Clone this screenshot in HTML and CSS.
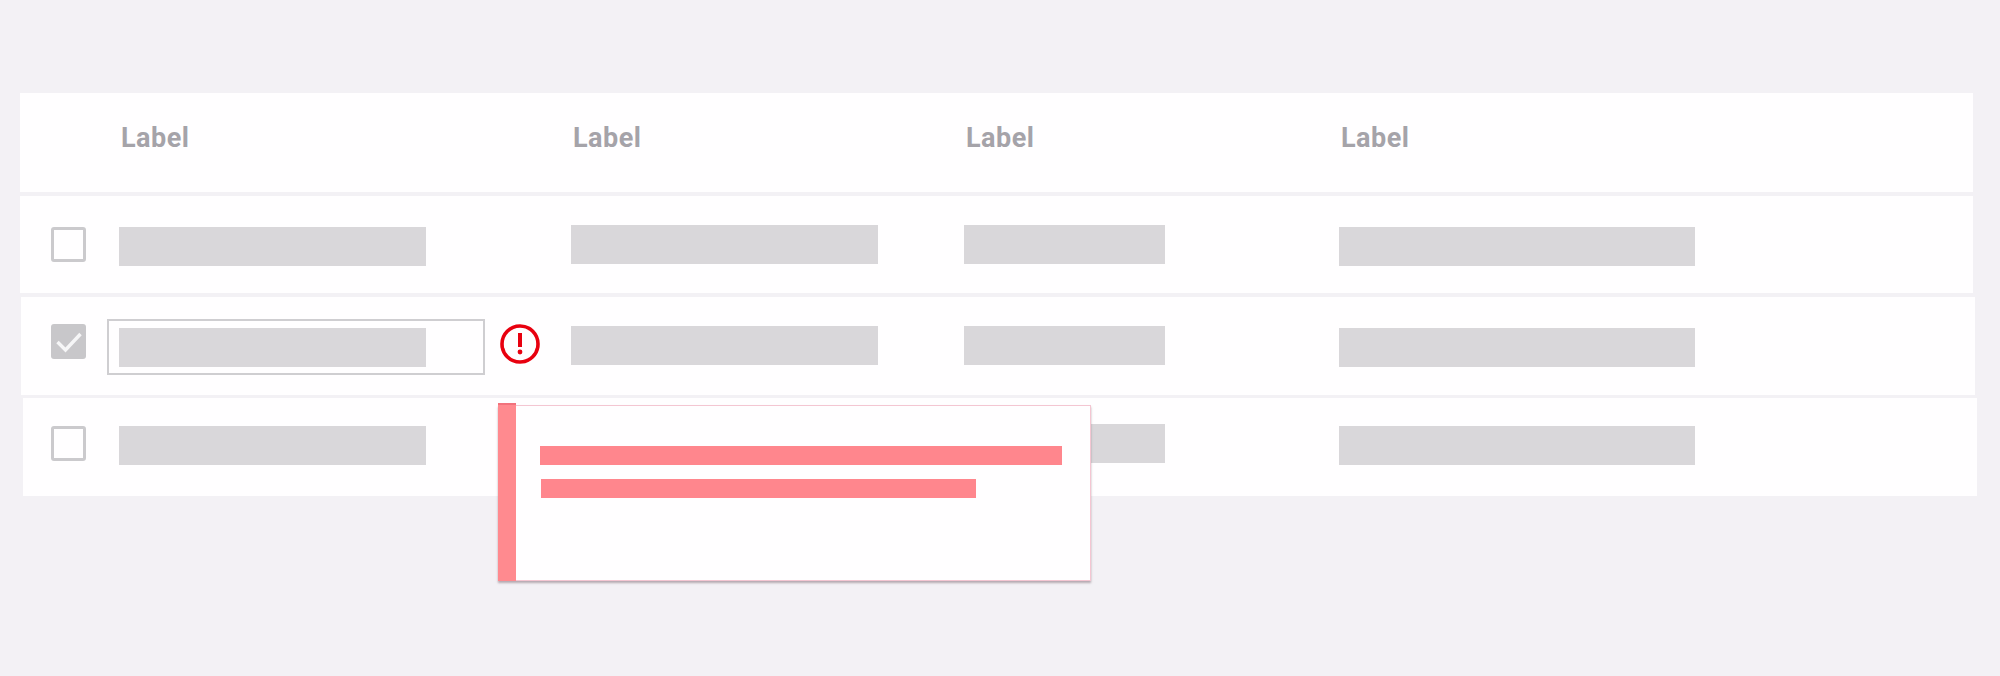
FILE: index.html
```html
<!DOCTYPE html>
<html lang="en">
<head>
  <meta charset="UTF-8">
  <meta name="viewport" content="width=device-width, initial-scale=1.0">
  <title>Table row error</title>
  <link rel="stylesheet" href="styles.css">
</head>
<body>
  <div class="table">
    <div class="row row-head">
      <span></span>
      <span class="label">Label</span>
      <span class="label">Label</span>
      <span class="label">Label</span>
      <span class="label">Label</span>
    </div>

    <div class="row row-first">
      <span class="checkbox"></span>
      <div class="bar bar-name"></div>
      <div class="bar bar-name bar-up"></div>
      <div class="bar bar-short bar-up"></div>
      <div class="bar bar-long"></div>
    </div>

    <div class="row row-second">
      <span class="checkbox checked">
        <svg viewBox="0 0 34 35" width="35" height="35">
          <polyline points="6,18 14,26 29,10" fill="none" stroke="#f6f6f7" stroke-width="3.4"/>
        </svg>
      </span>
      <div class="cell-edit">
        <div class="field">
          <div class="bar bar-name"></div>
        </div>
        <svg class="error-icon" viewBox="0 0 40 40" width="40" height="40">
          <circle cx="20" cy="20" r="18" fill="none" stroke="#e8000f" stroke-width="3.6"/>
          <rect x="18" y="9" width="4" height="14" fill="#e8000f"/>
          <circle cx="20" cy="28" r="2.4" fill="#e8000f"/>
        </svg>
      </div>
      <div class="bar bar-name bar-up"></div>
      <div class="bar bar-short bar-up"></div>
      <div class="bar bar-long"></div>
    </div>

    <div class="row row-third">
      <span class="checkbox"></span>
      <div class="bar bar-name"></div>
      <div class="bar bar-name bar-up"></div>
      <div class="bar bar-short bar-up"></div>
      <div class="bar bar-long"></div>
    </div>

    <div class="tooltip">
      <div class="tooltip-body">
        <div class="tooltip-line"></div>
        <div class="tooltip-line tooltip-line-short"></div>
      </div>
    </div>
  </div>
</body>
</html>
```

FILE: styles.css
```css
* {
  box-sizing: border-box;
  margin: 0;
  padding: 0;
}

body {
  font-family: 'Roboto', 'Liberation Sans', sans-serif;
  background: #f3f1f5;
  min-height: 100vh;
  padding: 93px 0 0 20px;
}

.table {
  position: relative;
  width: 1953px;
  filter: blur(0.6px);
}

/* columns: checkbox, name, two short ones, long one */
.row {
  display: grid;
  grid-template-columns: 68px 452px 393px 375px 1fr;
  align-items: start;
  background: #fffeff;
  padding-left: 31px;
  padding-top: 31px;
  margin-bottom: 4px;
  height: 97px;
}

.row-head {
  height: 99px;
  padding-top: 31px;
}

.row-second {
  height: 98px;
  margin-left: 1px;
  margin-right: -2px;
  padding-left: 30px;
  margin-bottom: 3px;
}

.row-third {
  height: 98px;
  margin-left: 3px;
  margin-right: -4px;
  padding-left: 28px;
  padding-top: 28px;
  margin-bottom: 0;
}

.label {
  font-size: 27px;
  font-weight: 700;
  line-height: 32px;
  letter-spacing: 0.5px;
  color: #a5a3a9;
  margin-top: -2px;
  padding-left: 2px;
}

.bar {
  height: 39px;
  background: #d9d7da;
}

.bar-up {
  margin-top: -2px;
}

.bar-name {
  width: 307px;
}

.bar-short {
  width: 201px;
}

.bar-long {
  width: 356px;
}

.checkbox {
  display: block;
  width: 35px;
  height: 35px;
  border: 3px solid #cbcacd;
  border-radius: 3px;
}

.checkbox.checked {
  margin-top: -4px;
  background: #c8c7ca;
  border: none;
}

.checkbox svg {
  display: block;
}

.cell-edit {
  display: flex;
  align-items: flex-start;
  gap: 15px;
  margin: -9px 0 0 -12px;
}

.field {
  border: 2px solid #cfced1;
  padding: 7px 57px 6px 10px;
}

.error-icon {
  margin-top: 5px;
}

.tooltip {
  position: absolute;
  left: 478px;
  top: 312px;
  width: 593px;
  height: 176px;
  background: #fffeff;
  border: 1px solid #f4c6d2;
  box-shadow: 0 2px 2px rgba(120, 100, 110, 0.5);
}

/* red strip sticks out a little above the box */
.tooltip::before {
  content: "";
  position: absolute;
  left: -1px;
  top: -3px;
  bottom: -1px;
  width: 18px;
  background: #ff8a8f;
  border-top: 2px solid #f2727c;
}

.tooltip-body {
  display: flex;
  flex-direction: column;
  gap: 14px;
  padding: 40px 28px 0 41px;
}

.tooltip-line {
  height: 19px;
  background: #ff868d;
}

.tooltip-line-short {
  width: 435px;
  margin-left: 1px;
}
```
